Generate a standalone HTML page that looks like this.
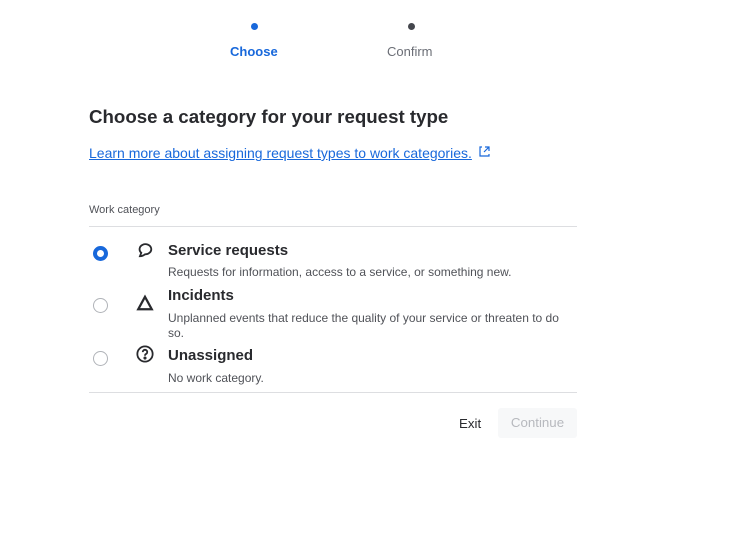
<!DOCTYPE html>
<html><head><meta charset="utf-8"><style>
*{margin:0;padding:0;box-sizing:border-box}
body{width:735px;height:533px;background:#fff;font-family:"Liberation Sans",Arial,sans-serif;color:#292a2e;position:relative;overflow:hidden}
.a{position:absolute}
.dot{width:7px;height:7px;border-radius:50%}
.radio{width:15px;height:15px;border-radius:50%;border:1px solid #b0b3b8;background:#fff}
.radio.on{border:4px solid #1868db}
.t{font-size:15px;font-weight:bold;color:#292a2e}
.d{font-size:12px;color:#505258;line-height:15px}
</style></head><body>
<div class="a dot" style="left:251px;top:23px;background:#1868db"></div>
<div class="a dot" style="left:408px;top:23px;background:#44464d"></div>
<div class="a" style="left:230px;top:44px;font-size:13px;font-weight:bold;color:#1868db">Choose</div>
<div class="a" style="left:387px;top:44px;font-size:13px;color:#6b6e76">Confirm</div>
<div class="a" style="left:89px;top:106px;font-size:18.7px;font-weight:bold">Choose a category for your request type</div>
<div class="a" style="left:89px;top:145px;font-size:14px;color:#1868db;text-decoration:underline">Learn more about assigning request types to work categories.</div>
<svg class="a" style="left:478px;top:145px" width="13" height="13" viewBox="0 0 13 13" fill="none" stroke="#1868db" stroke-width="1.2"><path d="M4 2H2v9h9V9M7 2h4v4M11 2L6 7"/></svg>
<div class="a" style="left:89px;top:204px;font-size:11px;color:#505258">Work category</div>
<div class="a" style="left:89px;top:226px;width:488px;height:1px;background:#dddee1"></div>
<div class="a radio on" style="left:93px;top:246px"></div>
<svg class="a" style="left:136px;top:241px" width="18" height="18" viewBox="0 0 16 16" fill="none" stroke="#292a2e" stroke-width="1.6"><path d="M3.5 13.5l1.2-3A5.2 4.5 0 1 1 8 11.8 7 7 0 0 1 3.5 13.5z"/></svg>
<div class="a t" style="left:168px;top:242px">Service requests</div>
<div class="a d" style="left:168px;top:265px">Requests for information, access to a service, or something new.</div>
<div class="a radio" style="left:93px;top:298px"></div>
<svg class="a" style="left:136px;top:294px" width="18" height="18" viewBox="0 0 16 16" fill="none" stroke="#292a2e" stroke-width="2"><path d="M8 2.5L2 13.5h12z" stroke-linejoin="miter"/></svg>
<div class="a t" style="left:168px;top:287px">Incidents</div>
<div class="a d" style="left:168px;top:311px;width:400px">Unplanned events that reduce the quality of your service or threaten to do so.</div>
<div class="a radio" style="left:93px;top:351px"></div>
<svg class="a" style="left:136px;top:345px" width="18" height="18" viewBox="0 0 16 16" fill="none" stroke="#292a2e" stroke-width="1.6"><circle cx="8" cy="8" r="6.8"/><path d="M6 6.3a2 2 0 1 1 2.8 1.8C8.2 8.4 8 8.8 8 9.5"/><circle cx="8" cy="11.6" r=".6" fill="#292a2e"/></svg>
<div class="a t" style="left:168px;top:347px">Unassigned</div>
<div class="a d" style="left:168px;top:371px">No work category.</div>
<div class="a" style="left:89px;top:392px;width:488px;height:1px;background:#dddee1"></div>
<div class="a" style="left:459px;top:416px;font-size:13.3px;color:#292a2e">Exit</div>
<div class="a" style="left:498px;top:408px;width:79px;height:30px;background:#f7f8f9;border-radius:3px;font-size:13.3px;color:#b7b9be;text-align:center;line-height:30px">Continue</div>
</body></html>
